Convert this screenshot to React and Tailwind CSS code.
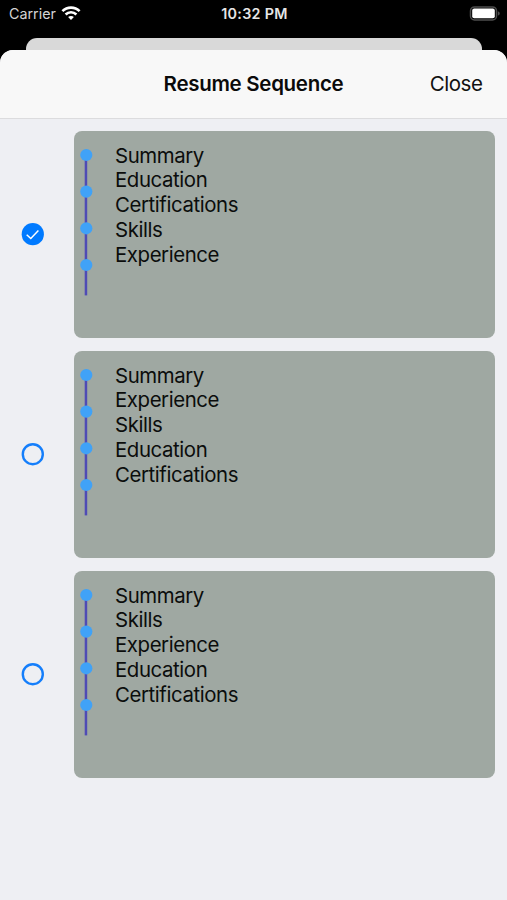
import React from 'react';

const sequences = [
  {
    id: 1,
    selected: true,
    sections: ['Summary', 'Education', 'Certifications', 'Skills', 'Experience'],
  },
  {
    id: 2,
    selected: false,
    sections: ['Summary', 'Experience', 'Skills', 'Education', 'Certifications'],
  },
  {
    id: 3,
    selected: false,
    sections: ['Summary', 'Skills', 'Experience', 'Education', 'Certifications'],
  },
];

function WifiIcon() {
  return (
    <svg width="20" height="15" viewBox="0 0 20 15" fill="none" stroke="#fff" strokeWidth="2.6">
      <path d="M1.4 5.2C6.2 0.4 13.8 0.4 18.6 5.2" />
      <path d="M4.6 8.5C7.6 5.5 12.4 5.5 15.4 8.5" />
      <path d="M10 14L7.1 11.1C8.7 9.6 11.3 9.6 12.9 11.1Z" fill="#fff" stroke="none" />
    </svg>
  );
}

function BatteryIcon() {
  return (
    <svg width="32" height="15" viewBox="0 0 32 15">
      <rect x="1.5" y="0.9" width="26" height="13" rx="4" fill="none" stroke="#4d4d4d" strokeWidth="1.5" />
      <rect x="3.2" y="2.6" width="22.6" height="9.6" rx="2" fill="#fff" />
      <path d="M28.9 5.2C31.4 6 31.4 8.8 28.9 9.6Z" fill="#4d4d4d" />
    </svg>
  );
}

function StatusBar() {
  return (
    <div className="grid grid-cols-[1fr_auto_1fr] items-center h-[27px] pl-[9px] pr-[6px] text-white">
      <div className="flex items-center gap-[5.5px]">
        <span className="text-[14.3px] text-[#d4d4d4]">Carrier</span>
        <WifiIcon />
      </div>
      <span className="pr-px text-center text-[14.3px] font-semibold tracking-[0.3px] text-[#e6e6e6] whitespace-nowrap">
        10:32 PM
      </span>
      <div className="flex justify-end">
        <BatteryIcon />
      </div>
    </div>
  );
}

function Radio({ selected }) {
  return (
    <svg width="24" height="24" viewBox="0 0 24 24" fill="none">
      {selected ? (
        <>
          <circle cx="11.8" cy="12.2" r="11.1" fill="#007aff" />
          <path d="M5.7 12.7L9.8 16.5L17.4 8.6" stroke="#fff" strokeWidth="1.5" />
        </>
      ) : (
        <circle cx="11.8" cy="12.2" r="10" stroke="#147efb" strokeWidth="2.4" />
      )}
    </svg>
  );
}

function Timeline() {
  return (
    <svg width="14" height="150" viewBox="0 0 14 150">
      <rect x="5.7" y="6" width="2.5" height="141.4" fill="#4f4bb5" />
      {[7, 43.6, 80.3, 117].map((cy) => (
        <circle key={cy} cx="7.3" cy={cy} r="6.1" fill="#40a2f7" />
      ))}
    </svg>
  );
}

function SequenceRow({ sequence }) {
  return (
    <div className="flex h-[207.5px]">
      <div className="w-[74.3px] flex items-center pl-[20.5px]">
        <Radio selected={sequence.selected} />
      </div>
      <div className="flex flex-1 rounded-[8px] bg-[#9fa8a2] pl-[4.7px] pt-[13.2px]">
        <div className="w-[36px] pt-[4.3px]">
          <Timeline />
        </div>
        <ul className="text-[20.4px] leading-[24.8px] tracking-[-0.41px] text-[#0b0d0c]">
          {sequence.sections.map((section) => (
            <li key={section}>{section}</li>
          ))}
        </ul>
      </div>
    </div>
  );
}

export default function App() {
  return (
    <div className="flex flex-col w-[507px] h-[900px] overflow-hidden bg-black font-[Inter,'Liberation_Sans',sans-serif]">
      <StatusBar />
      <div className="mt-[11px] mx-[25.5px] h-[12px] shrink-0 rounded-t-[11px] bg-[#d9d9d9]" />
      <div className="flex flex-col flex-1 rounded-t-[13px] overflow-hidden bg-[#eeeff3]">
        <header className="grid grid-cols-[1fr_auto_1fr] items-center h-[69px] px-[24.5px] bg-[#f8f8f8] border-b border-[#dcdcde]">
          <span />
          <h1 className="text-[20.5px] font-semibold tracking-[-0.3px] text-[#0a0a0a]">Resume Sequence</h1>
          <button className="justify-self-end text-[20.5px] tracking-[-0.45px] text-[#111]">Close</button>
        </header>
        <main className="flex flex-col gap-[12.5px] pt-[11.5px] pr-[12.5px]">
          {sequences.map((sequence) => (
            <SequenceRow key={sequence.id} sequence={sequence} />
          ))}
        </main>
      </div>
    </div>
  );
}
